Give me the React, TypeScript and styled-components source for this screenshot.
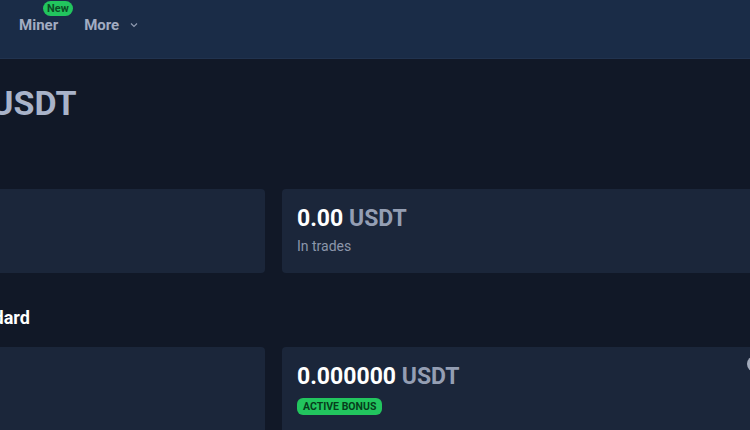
import React from 'react';
import styled, { createGlobalStyle } from 'styled-components';

const GlobalStyle = createGlobalStyle`
    html, body {
        margin: 0;
        padding: 0;
        background: #111827;
        overflow: hidden;
    }
    body {
        font-family: Roboto, "Liberation Sans", sans-serif;
    }
`;

const navItems = ['Trade', 'Markets', 'Miner', 'More'];

const App = () => {
    return (
        <>
            <GlobalStyle />
            <Shell>
                <Header>
                    <Nav>
                        {navItems.map((item) => (
                            <NavItem key={item}>
                                {item}
                                {item === 'Miner' && <NewBadge>New</NewBadge>}
                                {item === 'More' && (
                                    <svg width="10" height="10" viewBox="0 0 10 10">
                                        <path d="M2 3.5 L5 6.5 L8 3.5" fill="none" stroke="#8f9ab0" strokeWidth="1.2" />
                                    </svg>
                                )}
                            </NavItem>
                        ))}
                    </Nav>
                </Header>
                <Content>
                    <Title>
                        Balance: 0.00 <Unit>USDT</Unit>
                    </Title>
                    <CardGrid>
                        <Card>
                            <Amount>
                                0.00 <Unit>USDT</Unit>
                            </Amount>
                            <Caption>Available</Caption>
                        </Card>
                        <Card>
                            <Amount>
                                0.00 <Unit>USDT</Unit>
                            </Amount>
                            <Caption>In trades</Caption>
                        </Card>
                    </CardGrid>
                    <SectionTitle>Active bonus program: Standard</SectionTitle>
                    <CardGrid>
                        <Card $tall>
                            <Amount>
                                0.000000 <Unit>USDT</Unit>
                            </Amount>
                            <Caption>Bonus balance</Caption>
                        </Card>
                        <Card $tall>
                            <Amount>
                                0.000000 <Unit>USDT</Unit>
                            </Amount>
                            <StatusBadge>Active bonus</StatusBadge>
                            <HelpIcon>
                                <svg width="16" height="16" viewBox="0 0 16 16">
                                    <circle cx="8" cy="8" r="8" fill="#a3abbb" />
                                    <text x="8" y="12" textAnchor="middle" fontSize="11" fontWeight="700" fill="#1b263a" fontFamily="Roboto, sans-serif">?</text>
                                </svg>
                            </HelpIcon>
                        </Card>
                    </CardGrid>
                </Content>
            </Shell>
        </>
    );
};
export default App;

const Shell = styled.div`
    width: 1000px;
    margin-left: -225px;
`;

const Header = styled.header`
    height: 58px;
    background: #1a2c47;
    border-bottom: 1px solid #21334f;
    display: flex;
    align-items: flex-start;
`;

const Nav = styled.nav`
    display: flex;
    align-items: center;
    gap: 26px;
    padding: 16px 0 0 98px;
`;

const NavItem = styled.div`
    position: relative;
    display: flex;
    align-items: center;
    gap: 10px;
    font-size: 15px;
    font-weight: 700;
    line-height: 18px;
    color: #a2acc2;
`;

const NewBadge = styled.span`
    position: absolute;
    top: -15px;
    left: 24px;
    height: 15px;
    padding: 0 4px;
    border-radius: 8px;
    background: #22c55e;
    color: #0b4d25;
    font-size: 11px;
    font-weight: 700;
    line-height: 15px;
`;

const Content = styled.main`
    padding: 24px 0 0 0;
    margin-left: -3px;
    width: 1003px;
`;

const Title = styled.h1`
    margin: 0 0 66px 2px;
    font-size: 34px;
    font-weight: 700;
    line-height: 40px;
    color: #ffffff;
    & > span {
        color: #a9b3c9;
    }
`;

const CardGrid = styled.div`
    display: grid;
    grid-template-columns: 493px 493px;
    gap: 17px;
`;

const Card = styled.div<{ $tall?: boolean }>`
    position: relative;
    background: #1b263a;
    border-radius: 4px;
    padding: 16px 16px 17px 15px;
    min-height: ${(p) => (p.$tall ? '120px' : '51px')};
`;

const Amount = styled.div`
    font-size: 23px;
    font-weight: 700;
    line-height: 28px;
    color: #ffffff;
    white-space: nowrap;
`;

const Unit = styled.span`
    color: #949eb3;
`;

const Caption = styled.div`
    margin-top: 3px;
    font-size: 14px;
    line-height: 20px;
    color: #8c96aa;
`;

const StatusBadge = styled.span`
    display: inline-block;
    margin-top: 7px;
    padding: 0 6px;
    height: 17px;
    line-height: 17px;
    border-radius: 6px;
    background: #22c55e;
    color: #073d1c;
    font-size: 10.5px;
    font-weight: 700;
    text-transform: uppercase;
`;

const HelpIcon = styled.div`
    position: absolute;
    top: 9px;
    right: 12px;
    width: 16px;
    height: 16px;
`;

const SectionTitle = styled.h2`
    margin: 33px 0 17px -3px;
    font-size: 18px;
    font-weight: 700;
    line-height: 24px;
    color: #ffffff;
`;
